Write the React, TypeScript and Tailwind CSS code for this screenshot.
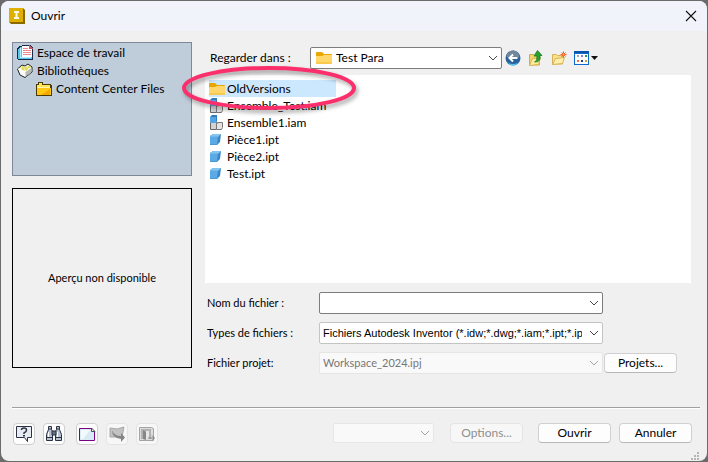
import { useState } from "react"
import type { ReactNode } from "react"

type FileKind = "folder" | "assembly" | "part"

const files: { name: string; kind: FileKind }[] = [
  { name: "OldVersions", kind: "folder" },
  { name: "Ensemble_Test.iam", kind: "assembly" },
  { name: "Ensemble1.iam", kind: "assembly" },
  { name: "Pièce1.ipt", kind: "part" },
  { name: "Pièce2.ipt", kind: "part" },
  { name: "Test.ipt", kind: "part" },
]

function AppIcon() {
  return (
    <svg width="16" height="16" viewBox="0 0 16 16" aria-hidden="true">
      <path d="M0 0h14l2 2v14H2l-2-2z" fill="#8a6a00" />
      <path d="M0 0h14v14H0z" fill="#dfb000" />
      <path d="M5 3h5v2H8.500v4H10v2H5V9h1.500V5H5z" fill="#fffbe6" />
    </svg>
  )
}

function WorkspaceIcon() {
  return (
    <svg width="16" height="16" viewBox="0 0 16 16" shapeRendering="crispEdges" aria-hidden="true">
      <path d="M0 3l3-2h2V0h8l3 3v12H1L0 14z" fill="#1c2a45" />
      <path d="M1 4l2-2h2v10H1zM1 12h14v2H1z" fill="#58c4f0" />
      <path d="M3 3h1v9h10v1H3z" fill="#b8ecff" />
      <path d="M5 1h7l3 3v8H5z" fill="#fff" />
      <path d="M12 0v4h4z" fill="#c4566a" />
      <path d="M6 3h5M6 5h8M6 7h8M6 9h8" transform="translate(0 .5)" stroke="#f08a92" />
    </svg>
  )
}

function LibraryIcon() {
  return (
    <svg width="16" height="16" viewBox="0 0 16 16" aria-hidden="true">
      <path d="M.5 6L5 2l3 1 3-2 4 3v5l-7 5.500L3 12z" fill="#fafaf6" stroke="#222" />
      <path d="M3 4.500l3-1.500 2 1.500 3-2 3 1.500-5 4-4-1z" fill="#e2dc5d" />
      <path d="M4 5h1M7 6h1M10 4h1M11 6h1M8 8h1" stroke="#fffef0" />
      <path d="M8.500 9v5l6-5V5z" fill="#b7b9b5" />
      <path d="M1 6l7 3" stroke="#fff" />
    </svg>
  )
}

function ContentFolderIcon() {
  return (
    <svg width="16" height="16" viewBox="0 0 16 16" shapeRendering="crispEdges" aria-hidden="true">
      <path d="M0 3h2V1h5v2h8v1h1v11H0z" fill="#4a3b00" />
      <path d="M1 4h2V2h3v2h8v10H1z" fill="#ffe45c" />
      <path d="M1 7h14v7H1z" fill="#ffc814" />
      <path d="M2 6h12v1H2z" fill="#fff5ad" />
      <path d="M8 12l6-4v6H5z" fill="#f5a800" />
    </svg>
  )
}

function FolderIcon() {
  return (
    <svg width="16" height="14" viewBox="0 0 16 14" aria-hidden="true">
      <path d="M0 2q0-1 1-1h5l2 2h7q1 0 1 1v4H0z" fill="#e9a600" />
      <path d="M0 5h6l2-1h8v8q0 1-1 1H1q-1 0-1-1z" fill="#ffd76a" />
      <path d="M0 11h16v1q0 1-1 1H1q-1 0-1-1z" fill="#f8c94e" />
    </svg>
  )
}

function AssemblyIcon() {
  return (
    <svg width="16" height="16" viewBox="0 0 16 16" aria-hidden="true">
      <path d="M1.500 7.500h6v7h-6z" fill="#d2d2d2" stroke="#666" />
      <path d="M7.500 9.500l1-2h5v5l-1 2h-5z" fill="#e3e3e3" stroke="#777" />
      <path d="M1 2l2-2h5v6L7 8H1z" fill="#2f7fc0" />
      <path d="M1 2h6v6H1z" fill="#55a5e2" />
    </svg>
  )
}

function PartIcon() {
  return (
    <svg width="16" height="16" viewBox="0 0 16 16" aria-hidden="true">
      <path d="M1 4l3-2h8l-1 8-3 3H1z" fill="#3a86c4" />
      <path d="M1 4l3-2h8L9 5H1z" fill="#86c4f0" />
      <path d="M1 4.500h8l-1 8H1z" fill="#5aaae6" />
    </svg>
  )
}

function BackIcon() {
  return (
    <svg width="16" height="16" viewBox="0 0 16 16" aria-hidden="true">
      <circle cx="8" cy="8" r="7.500" fill="#28639c" />
      <path d="M1.500 7a6.500 6.500 0 0 1 13 0q-6 2-13 0z" fill="#71879c" />
      <path d="M3 12.500q5 3 10 0-2 3-5 3t-5-3z" fill="#4fc6f2" />
      <path d="M12.500 8H5M8 4.500L4.500 8 8 11.500" fill="none" stroke="#fff" strokeWidth="2" />
    </svg>
  )
}

function UpFolderIcon() {
  return (
    <svg width="16" height="16" viewBox="0 0 16 16" aria-hidden="true">
      <path d="M1.500 15V4.500h4l1 1h5V15z" fill="#f3d36b" stroke="#d0ac50" />
      <path d="M1.500 15.500l3-7 8-1-2 7z" fill="#ffee9f" stroke="#d8b356" />
      <path d="M6.500 12q3-1 2.500-6H6l3.500-5.500L14 5.500h-2q1 7-5.500 6.500z" fill="#27a32a" stroke="#1d7a24" strokeWidth=".8" />
    </svg>
  )
}

function NewFolderIcon() {
  return (
    <svg width="16" height="16" viewBox="0 0 16 16" aria-hidden="true">
      <path d="M1.500 14V4.500h4l1 1h5V14z" fill="#f9e08a" stroke="#d8b356" />
      <path d="M1.500 14.500l3-6 9-1-2 6z" fill="#fff0ad" stroke="#d8b356" />
      <path d="M12.500 1.500v6M9.500 4.500h6M10.500 2.500l4 4M14.500 2.500l-4 4" stroke="#f9532e" />
      <circle cx="12.500" cy="4.500" r="1" fill="#ffc13b" />
    </svg>
  )
}

function ViewIcon() {
  return (
    <svg width="25" height="16" viewBox="0 0 25 16" shapeRendering="crispEdges" aria-hidden="true">
      <path d="M0 1h15v14H0z" fill="#0b6bd0" />
      <path d="M0 1h15v2H0z" fill="#0a55a8" />
      <path d="M1 4h13v10H1z" fill="#fff" />
      <path d="M3 5h2v2H3z" fill="#a3a3b8" />
      <path d="M7 5h2v2H7z" fill="#8383d5" />
      <path d="M11 5h2v2h-2z" fill="#2aa333" />
      <path d="M3 10h2v2H3z" fill="#ef6b43" />
      <path d="M7 10h2v2H7z" fill="#173a91" />
      <path d="M11 10h2v2h-2z" fill="#d3a325" />
      <path d="M17 6h7l-3.500 4z" fill="#111" shapeRendering="auto" />
    </svg>
  )
}

function HelpIcon() {
  return (
    <svg width="18" height="18" viewBox="0 0 18 18" aria-hidden="true">
      <path d="M1.500 1.500h15v11h-4v4l-3-4h-8z" fill="#e8ecf2" stroke="#2c3342" />
      <path d="M6.500 5q0-2 2.500-2t2.500 2-2.500 3v1" fill="none" stroke="#2c3342" strokeWidth="1.500" />
      <path d="M8 10h2v1.500H8z" fill="#2c3342" />
    </svg>
  )
}

function FindIcon() {
  return (
    <svg width="18" height="18" viewBox="0 0 18 18" aria-hidden="true">
      <path d="M3.500 1.500h3v3l1 2v9h-6v-6l2-5zM11.500 1.500h3v3l2 5v6h-6v-9l1-2z" fill="#b9c2d0" stroke="#293142" />
      <path d="M7 6h4v4H7z" fill="#667085" stroke="#293142" />
      <path d="M3 4h4M11 4h4M1.500 12.500h6M10.500 12.500h6" stroke="#293142" />
      <path d="M3.500 7v5M12.500 7v5" stroke="#fff" />
    </svg>
  )
}

function NewFileIcon() {
  return (
    <svg width="18" height="18" viewBox="0 0 18 18" aria-hidden="true">
      <path d="M1.500 3.500h12l3 3v9h-15z" fill="#d8ebf5" stroke="#7c0086" />
      <path d="M3 5h9l-7 9H3z" fill="#fff" opacity=".7" />
      <path d="M13.500 3v3.500H17z" fill="#fff" stroke="#444b55" />
    </svg>
  )
}

function SendIcon() {
  return (
    <svg width="18" height="18" viewBox="0 0 18 18" aria-hidden="true">
      <path d="M2 3l7 1 7-2-2 10H2z" fill="#c2c2c2" stroke="#a8a8a8" />
      <path d="M4 5q2 6 9 6V8l4 4.500-4 4.500v-3Q4 13 4 5z" fill="#858585" />
    </svg>
  )
}

function ExitIcon() {
  return (
    <svg width="18" height="18" viewBox="0 0 18 18" aria-hidden="true">
      <path d="M1.500 2.500h12l2 1v12h-14z" fill="#ddd" stroke="#a4a4a4" />
      <path d="M3 4h10v10H3z" fill="#b2b2b2" />
      <path d="M8 6h3v8H8z" fill="#e7e7e7" />
      <path d="M5 5l3 2v8l-3-1z" fill="#868686" />
      <path d="M10 13h6M14 10.500l2.500 2.500-2.500 2.500" fill="none" stroke="#818181" />
    </svg>
  )
}

function Chevron() {
  return (
    <svg className="pointer-events-none absolute inset-y-0 right-[3px] my-auto" width="10" height="6" viewBox="0 0 10 6" aria-hidden="true">
      <path d="M1 1l4 4 4-4" fill="none" stroke="currentColor" />
    </svg>
  )
}

function FileIcon({ kind }: { kind: FileKind }) {
  if (kind === "folder") return <FolderIcon />
  if (kind === "assembly") return <AssemblyIcon />
  return <PartIcon />
}

function ToolButton({ label, disabled, children }: { label: string; disabled?: boolean; children: ReactNode }) {
  return (
    <button
      type="button"
      aria-label={label}
      disabled={disabled}
      className="flex size-[22px] items-center justify-center rounded border border-[#cfcfcf] bg-[#fdfdfd] disabled:border-[#e4e4e4] disabled:bg-[#f7f7f7]"
    >
      {children}
    </button>
  )
}

function PushButton({ disabled, children }: { disabled?: boolean; children: ReactNode }) {
  return (
    <button
      type="button"
      disabled={disabled}
      className="h-5 w-[73px] shrink-0 rounded border border-[#d0d0d0] border-b-[#b8b8b8] bg-[#fdfdfd] text-xs leading-4 disabled:border-[#e4e4e4] disabled:bg-[#f7f7f7] disabled:text-[#8f8f8f]"
    >
      {children}
    </button>
  )
}

export default function App() {
  const [selected, setSelected] = useState("OldVersions")
  const [fileName, setFileName] = useState("")

  return (
    <div className="flex min-h-screen bg-[#6b6b6b] p-px font-['Lato','Open_Sans',sans-serif] text-[11px] text-black">
      <main className="flex flex-1 flex-col overflow-hidden rounded-lg bg-[#f0f0f0]">
        <header className="flex h-[30px] items-center bg-[#f0f3f9] pr-2 pl-2">
          <AppIcon />
          <h1 className="ml-1.5 flex-1 text-xs">Ouvrir</h1>
          <button type="button" aria-label="Fermer" className="p-0.5">
            <svg width="12" height="12" viewBox="0 0 12 12" aria-hidden="true">
              <path d="M1 1l10 10M11 1L1 11" stroke="#111" strokeWidth="1.100" />
            </svg>
          </button>
        </header>

        <div className="flex flex-1 gap-[13px] pt-[11px] pr-4 pl-[11px]">
          <aside className="flex w-[180px] shrink-0 flex-col gap-3">
            <nav className="h-[134px] border border-[#7f879b] bg-[#bfcddb] px-1 py-px text-xs leading-[18px]">
              <a href="#workspace" className="flex items-center gap-1">
                <WorkspaceIcon />
                Espace de travail
              </a>
              <a href="#libraries" className="flex items-center gap-1">
                <LibraryIcon />
                Bibliothèques
              </a>
              <a href="#content-center" className="flex items-center gap-1 pl-[19px]">
                <ContentFolderIcon />
                Content Center Files
              </a>
            </nav>
            <div className="flex h-[180px] items-center justify-center border border-black">Aperçu non disponible</div>
          </aside>

          <section className="flex min-w-0 flex-1 flex-col">
            <div className="flex items-center pt-[5px] pl-[5px]">
              <label htmlFor="look-in" className="w-[100px] text-xs">
                Regarder dans :
              </label>
              <div className="relative flex h-[22px] w-[192px] items-center rounded-xs border border-[#7d7d7d] bg-white pl-[5px] text-[#444]">
                <FolderIcon />
                <select id="look-in" className="h-full flex-1 appearance-none pr-5 pl-1 text-xs text-black outline-none">
                  <option>Test Para</option>
                </select>
                <Chevron />
              </div>
              <div className="ml-[3px] flex gap-[7px]">
                <button type="button" aria-label="Précédent">
                  <BackIcon />
                </button>
                <button type="button" aria-label="Dossier parent">
                  <UpFolderIcon />
                </button>
                <button type="button" aria-label="Nouveau dossier">
                  <NewFolderIcon />
                </button>
                <button type="button" aria-label="Affichage">
                  <ViewIcon />
                </button>
              </div>
            </div>

            <div className="relative mt-1.5 h-[208px] bg-white px-1 py-[5px]">
              <ul>
                {files.map((file) => (
                  <li key={file.name}>
                    <button
                      type="button"
                      onClick={() => setSelected(file.name)}
                      className={`flex h-[17px] w-[127px] items-center gap-0.5 text-xs whitespace-nowrap ${
                        file.name === selected ? "bg-[#cce8ff]" : ""
                      }`}
                    >
                      <FileIcon kind={file.kind} />
                      {file.name}
                    </button>
                  </li>
                ))}
              </ul>
              <svg
                className="pointer-events-none absolute -top-3 -left-7 drop-shadow-[2px_3px_2px_rgba(0,0,0,0.35)]"
                width="184"
                height="52"
                viewBox="0 0 184 52"
                aria-hidden="true"
              >
                <ellipse cx="92" cy="25" rx="85" ry="20" fill="none" stroke="#fb2f6c" strokeWidth="4" />
              </svg>
            </div>

            <div className="mt-[9px] grid grid-cols-[111px_1fr_73px] items-center gap-x-px gap-y-2 pr-[14px] pl-0.5">
              <label htmlFor="file-name">Nom du fichier :</label>
              <div className="relative h-[22px] rounded-xs border border-[#7d7d7d] bg-white text-[#444]">
                <input
                  id="file-name"
                  type="text"
                  value={fileName}
                  onChange={(event) => setFileName(event.target.value)}
                  className="h-full w-full pr-5 pl-1 text-black outline-none"
                />
                <Chevron />
              </div>
              <span />

              <label htmlFor="file-type">Types de fichiers :</label>
              <div className="relative h-[22px] min-w-0 rounded-xs border border-[#c4c4c4] bg-white text-[#444]">
                <select
                  id="file-type"
                  className="h-full w-full appearance-none pr-5 pl-[3px] font-['Liberation_Sans',Arial,sans-serif] text-black outline-none"
                >
                  <option>Fichiers Autodesk Inventor (*.idw;*.dwg;*.iam;*.ipt;*.ipn;*.ide)</option>
                </select>
                <Chevron />
              </div>
              <span />

              <label htmlFor="project">Fichier projet:</label>
              <div className="relative h-[22px] rounded-xs border border-[#e6e6e6] bg-[#f9f9f9] text-[#a6a6a6]">
                <select id="project" disabled className="h-full w-full appearance-none pr-5 pl-[3px] text-[#777] opacity-100">
                  <option>Workspace_2024.ipj</option>
                </select>
                <Chevron />
              </div>
              <PushButton>Projets...</PushButton>
            </div>
          </section>
        </div>

        <footer className="relative mr-[7px] ml-[11px] flex h-[54px] border-t border-[#a0a0a0] pt-[15px] shadow-[inset_0_1px_0_#fff]">
          <div className="flex gap-2 pl-px">
            <ToolButton label="Aide">
              <HelpIcon />
            </ToolButton>
            <ToolButton label="Rechercher">
              <FindIcon />
            </ToolButton>
            <div className="ml-[3px] flex gap-2">
              <ToolButton label="Nouveau fichier">
                <NewFileIcon />
              </ToolButton>
              <ToolButton label="Envoyer" disabled>
                <SendIcon />
              </ToolButton>
              <ToolButton label="Quitter" disabled>
                <ExitIcon />
              </ToolButton>
            </div>
          </div>
          <div className="ml-auto flex gap-2 pr-2">
            <div className="relative mr-2 h-5 w-[101px] rounded-xs border border-[#e6e6e6] bg-[#f9f9f9] text-[#a6a6a6]">
              <select aria-label="Version" disabled className="h-full w-full appearance-none" />
              <Chevron />
            </div>
            <div className="mr-[7px]">
              <PushButton disabled>Options...</PushButton>
            </div>
            <PushButton>Ouvrir</PushButton>
            <PushButton>Annuler</PushButton>
          </div>
          <svg className="absolute right-0 bottom-0" width="9" height="9" viewBox="0 0 9 9" fill="#b5b5b5" aria-hidden="true">
            <path d="M6 0h2v2H6zM3 3h2v2H3zM6 3h2v2H6zM0 6h2v2H0zM3 6h2v2H3zM6 6h2v2H6z" />
          </svg>
        </footer>
      </main>
    </div>
  )
}
